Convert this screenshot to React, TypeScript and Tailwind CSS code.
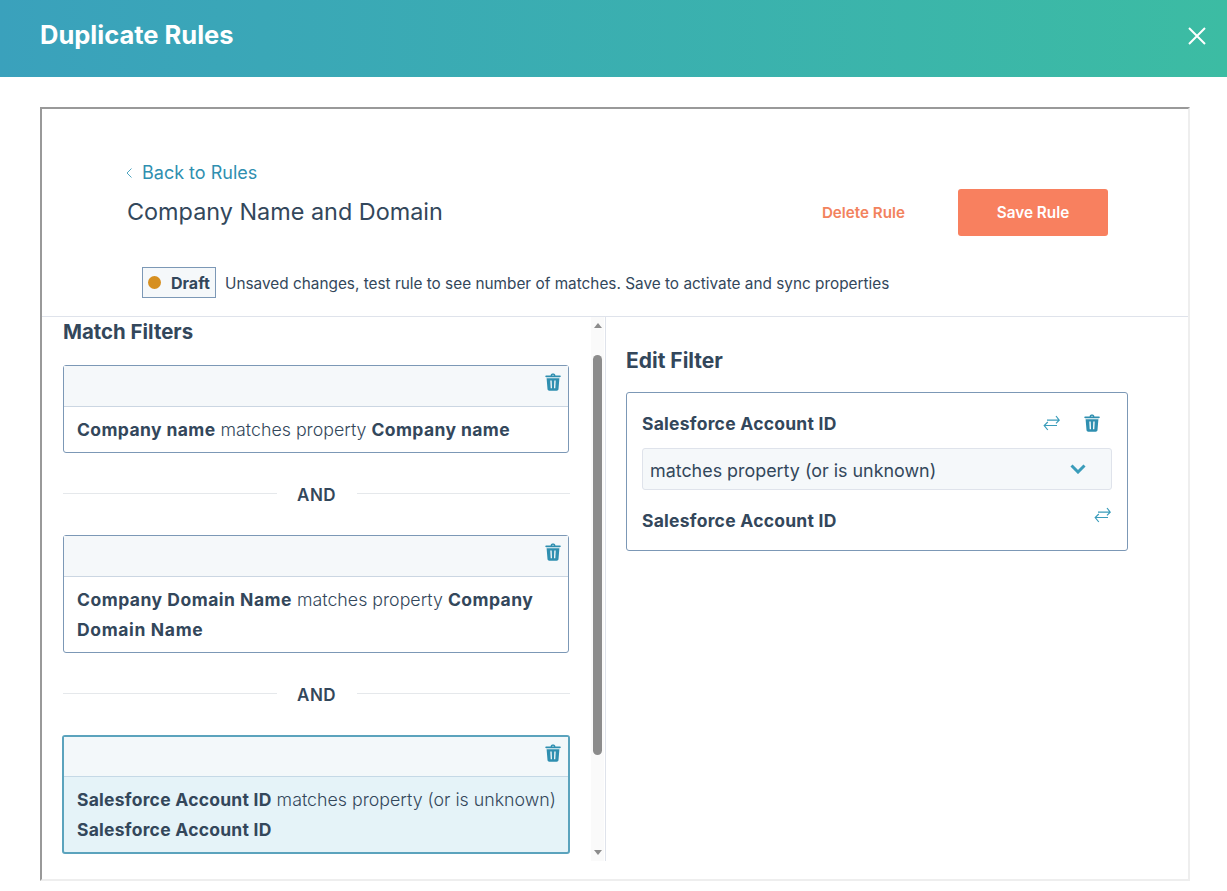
const Trash = ({ className = "" }: { className?: string }) => (
  <svg viewBox="0 0 16 18" className={className} fill="#2f8fb0">
    <path d="M5.6 2.4 C5.8 1 6.6.4 8 .4 s2.2.6 2.4 2 h4.4 c.6 0 1 .4 1 .9 s-.4.9-1 .9 H1.2 c-.6 0-1-.4-1-.9 s.4-.9 1-.9 Z M7 2.4 h2 C8.9 1.9 8.5 1.7 8 1.7 s-.9.2-1 .7 Z" />
    <path fillRule="evenodd" d="M1.6 5.2 h12.8 l-.9 10.9 c-.1 1-.8 1.6-1.8 1.6 H4.3 c-1 0-1.7-.6-1.8-1.6 Z M5.3 7.4 l.4 7.8 h1.3 L6.7 7.4 Z M9.3 7.4 L9 15.2 h1.3 l.4-7.8 Z" />
  </svg>
);

const Swap = ({ className = "" }: { className?: string }) => (
  <svg viewBox="0 0 17 16" className={className} fill="none" stroke="#3a9cba" strokeWidth="1.2">
    <path d="M4 5.2 H16 M13 1 L16.2 5.2 L13 8.4" />
    <path d="M14 10.5 H1.2 M4.8 7 L1.2 10.5 L4.8 15" />
  </svg>
);

const Card = ({ children, active = false }: { children: React.ReactNode; active?: boolean }) => (
  <div
    className={
      active
        ? "-mx-px rounded-[3px] border-2 border-[#5ba3bd] bg-[#e5f3f8]"
        : "rounded-[3px] border border-[#7c98b6]"
    }
  >
    <div
      className={
        active
          ? "flex h-[40px] items-center justify-end border-b border-[#c5d9e6] bg-[#f3f8fa] pr-[7px] pb-[7px]"
          : "flex h-[41px] items-center justify-end border-b border-[#cbd6e2] bg-[#f5f8fa] pr-[7px] pb-[8px]"
      }
    >
      <Trash className="h-[18px] w-4" />
    </div>
    <div className="whitespace-nowrap px-[13px] pt-[8px] pb-[7px] text-[17.8px] leading-[30px] font-light text-[#33475b]">{children}</div>
  </div>
);

const And = () => (
  <div className="-mr-px flex h-[82px] items-center gap-5 pb-[2px]">
    <div className="h-px flex-1 bg-[#e5e8eb]" />
    <span className="w-[40px] pt-[5px] text-center text-[17px] font-semibold tracking-[0.4px] text-[#33475b]">AND</span>
    <div className="h-px flex-1 bg-[#e5e8eb]" />
  </div>
);

const B = ({ children, className = "tracking-[0.3px]" }: { children: React.ReactNode; className?: string }) => (
  <b className={`text-[17.5px] font-bold text-[#33475b] ${className}`}>{children}</b>
);

export default function App() {
  return (
    <div className="h-[891px] w-[1227px] overflow-hidden bg-white font-['Inter',sans-serif] text-[#33475b]">
      <header className="flex h-[77px] items-center justify-between bg-gradient-to-r from-[#3aa1bc] to-[#3cbca3] pb-[6px] pl-10 pr-[21px]">
        <h1 className="text-[25.5px] font-bold text-white">Duplicate Rules</h1>
        <svg viewBox="0 0 18 18" className="h-[18px] w-[18px]" stroke="#fff" strokeWidth="2" fill="none">
          <path d="M1 1 L17 17 M17 1 L1 17" />
        </svg>
      </header>

      <main className="mx-10 mt-[30px] flex h-[774px] w-[1150px] flex-col border-2 border-r-[#eeeeee] border-b-[#eeeeee] border-t-[#999999] border-l-[#999999]">
        <section className="h-[208px] shrink-0 border-b border-[#dfe3eb] pt-[52px]">
          <div className="flex items-center gap-[10px] pl-[84px] text-[18px] leading-[22px] text-[#2f8fb0]">
            <svg viewBox="0 0 6 10" className="h-[10px] w-[6px]" fill="none" stroke="#4fa5c0" strokeWidth="1">
              <path d="M5.5.5 L1 5 L5.5 9.5" />
            </svg>
            <span className="pt-[1px]">Back to Rules</span>
          </div>
          <div className="mt-[3px] flex h-[49px] items-center pl-[85px] pr-[80px] pt-[2px]">
            <h2 className="flex-1 pb-[2px] text-[23.4px] font-normal text-[#33475b]">Company Name and Domain</h2>
            <span className="mr-[53px] pt-[1px] text-[15.2px] font-semibold text-[#f2825d]">Delete Rule</span>
            <button className="h-[47px] w-[150px] rounded-[3px] bg-[#f8805f] pt-[1px] text-[15.3px] font-semibold text-white">
              Save Rule
            </button>
          </div>
          <div className="mt-[31px] flex items-center gap-[9px] pl-[100px]">
            <span className="flex h-[31px] w-[74px] items-center gap-[10px] border border-[#7c98b6] bg-[#f5f8fa] pl-[5px] text-[16px] font-bold text-[#33475b]">
              <span className="h-[13px] w-[13px] shrink-0 rounded-full bg-[#d68f20]" />
              Draft
            </span>
            <span className="pt-[2px] text-[15.35px] text-[#33475b]">
              Unsaved changes, test rule to see number of matches. Save to activate and sync properties
            </span>
          </div>
        </section>

        <div className="flex min-h-0">
          <section className="relative h-[544px] w-[564px] shrink-0 border-r border-[#dfe3eb] pl-[21px] pr-[36px]">
            <h3 className="pt-[1px] text-[20.4px] font-bold leading-[28px] text-[#33475b]">Match Filters</h3>
            <div className="mt-[19px]">
              <Card>
                <B className="tracking-[0.4px]">Company name</B> matches property{" "}
                <B className="tracking-[0.4px]">Company name</B>
              </Card>
              <And />
              <Card>
                <B className="tracking-[0.5px]">Company Domain Name</B> matches property{" "}
                <B className="tracking-[0.45px]">Company</B>
                <br />
                <B className="tracking-[0.65px]">Domain Name</B>
              </Card>
              <And />
              <Card active>
                <B className="tracking-[0.25px]">Salesforce Account ID</B> matches property (or is unknown)
                <br />
                <B className="tracking-[0.25px]">Salesforce Account ID</B>
              </Card>
            </div>
            <div className="absolute right-px top-0 bottom-0 flex w-[13px] flex-col items-center bg-[#fafafa]">
              <div className="mt-[6px] h-0 w-0 border-x-[4px] border-b-[5px] border-x-transparent border-b-[#8c8c8c]" />
              <div className="mt-[27px] h-[400px] w-[9px] rounded-full bg-[#8c8c8c]" />
              <div className="mt-auto mb-[6px] h-0 w-0 border-x-[4px] border-t-[5px] border-x-transparent border-t-[#8c8c8c]" />
            </div>
          </section>

          <section className="flex-1 pl-[20px] pr-[60px] pt-[29px]">
            <h3 className="pt-[1px] text-[21px] font-bold leading-[28px] text-[#33475b]">Edit Filter</h3>
            <div className="mt-[17px] h-[159px] w-[502px] rounded-[3px] border border-[#7c98b6] px-[15px]">
              <div className="flex h-[55px] items-center justify-between pr-[12px] pt-[8px]">
                <B className="tracking-[0.25px]">Salesforce Account ID</B>
                <div className="flex items-center gap-[24px] pb-[4px]">
                  <Swap className="h-4 w-[17px]" />
                  <Trash className="h-[18px] w-4" />
                </div>
              </div>
              <div className="flex h-[42px] items-center justify-between rounded-[3px] border border-[#dfe3eb] bg-[#f5f8fa] pl-[7px] pr-[25px] text-[17.9px] text-[#33475b]">
                <span className="pt-[4px]">matches property (or is unknown)</span>
                <svg viewBox="0 0 16 10" className="h-[10px] w-[16px]" fill="none" stroke="#3a9cba" strokeWidth="3">
                  <path d="M1.5 1.5 L8 8 L14.5 1.5" />
                </svg>
              </div>
              <div className="flex h-[61px] items-start justify-between pr-[1px] pt-[15px]">
                <span className="pt-[3px]">
                  <B className="tracking-[0.25px]">Salesforce Account ID</B>
                </span>
                <Swap className="mt-[2px] h-4 w-[17px]" />
              </div>
            </div>
          </section>
        </div>
      </main>
    </div>
  );
}
